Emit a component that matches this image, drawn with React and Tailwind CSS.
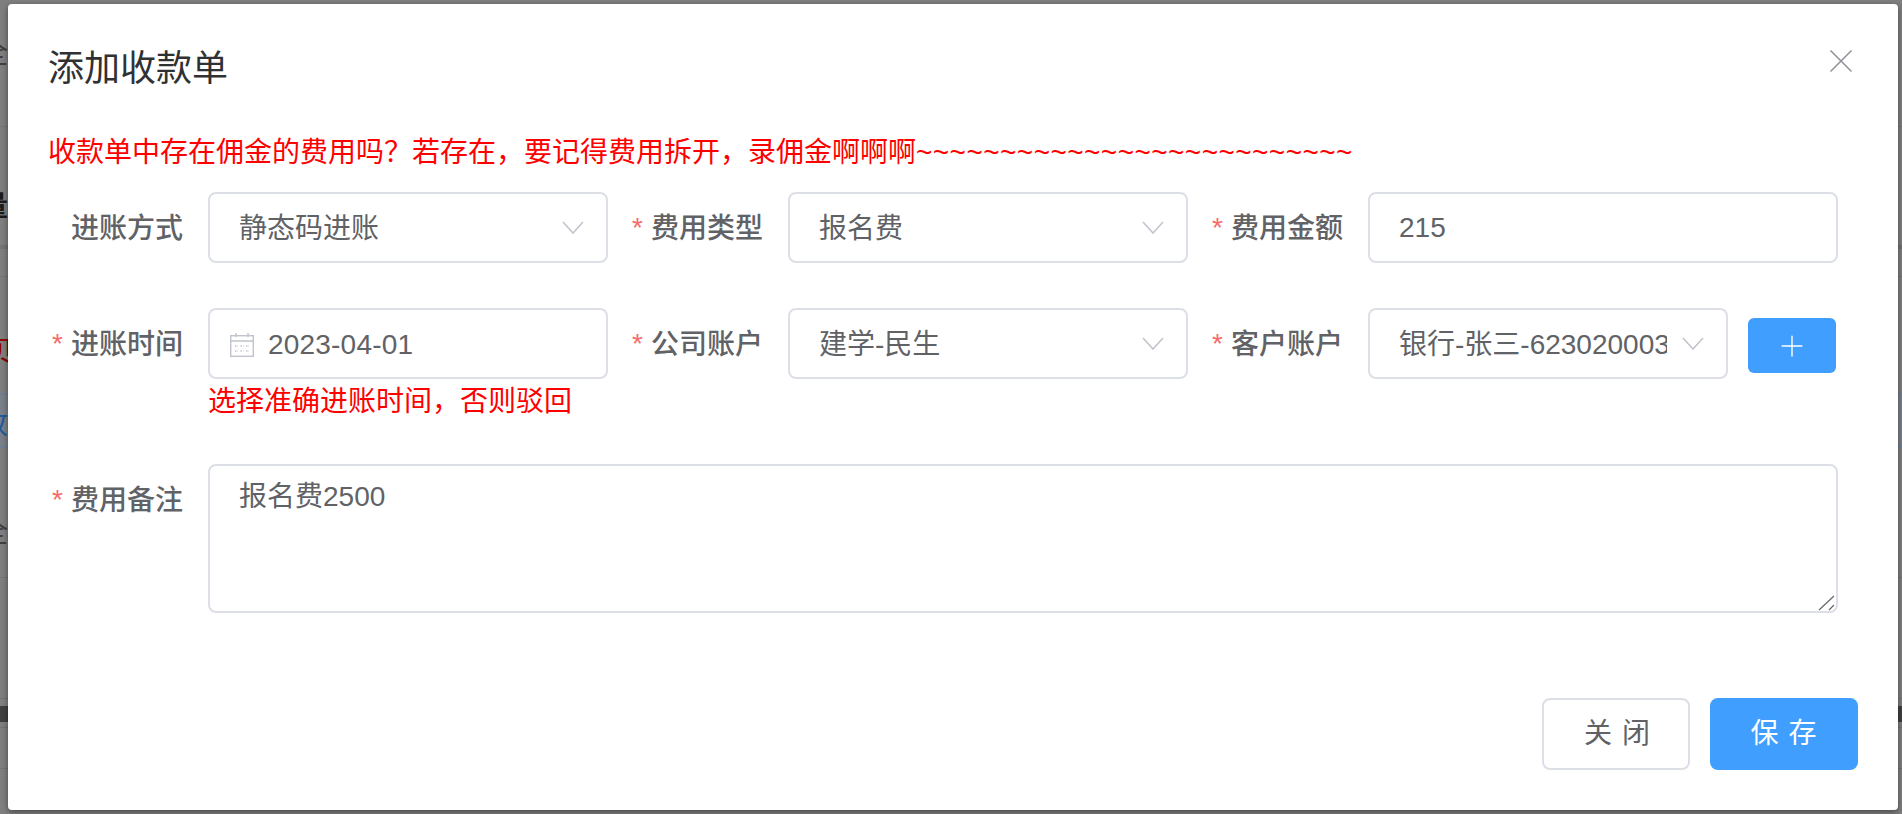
import React from "react";
import { X, Plus } from "lucide-react";

const FONT = "font-['Liberation_Sans','Noto_Sans_CJK_SC',sans-serif]";

const Arrow = () => (
  <svg width="22" height="13" viewBox="0 0 22 13" fill="none" className="shrink-0">
    <path d="M1 1L11 12L21 1" stroke="#c0c4cc" strokeWidth="1.6" />
  </svg>
);

const CalendarIcon = () => (
  <svg width="24" height="24" viewBox="0 0 24 24" fill="none" stroke="#c0c4cc" strokeWidth="1.4" className="shrink-0">
    <rect x="0.7" y="2.7" width="22.6" height="20.6" />
    <path d="M0.7 8H23.3M6 0V4M18 0V4" />
    <path d="M5 13H8M10.5 13H13.5M16 13H19M5 18H8M10.5 18H13.5M16 18H19" strokeDasharray="1.5 1" />
  </svg>
);

const Label = ({ text, required }) => (
  <label className="w-[160px] h-[71px] shrink-0 flex items-center justify-end pr-[25px] pt-[2px] font-medium text-[#606266]">
    {required && <span className="text-[#f56c6c] mr-[8px] -mt-[2px] font-normal">*</span>}
    <span>{text}</span>
  </label>
);

const SelectBox = ({ value, width = "w-[400px]" }) => (
  <div className={`${width} h-[71px] border-2 border-[#dcdfe6] rounded-lg bg-white flex items-center pl-[29px] pr-[22px] pt-[2px] text-[#606266]`}>
    <span className="flex-1 overflow-hidden whitespace-nowrap">{value}</span>
    <div className="ml-[15px] -mt-0.5 flex">
      <Arrow />
    </div>
  </div>
);

const Field = ({ label, required, children }) => (
  <div className="flex items-start">
    <Label text={label} required={required} />
    {children}
  </div>
);

export default function App() {
  return (
    <div className={`relative h-[814px] w-full overflow-hidden bg-[#7f7f7f] text-[28px] ${FONT}`}>
      {/* page behind the mask, only the edges show */}
      <div className="absolute left-0 right-0 top-[706px] h-[16px] bg-[#404040]" />
      <div className="absolute left-0 right-0 top-[126px] h-px bg-[#777777]" />
      <div className="absolute left-0 right-0 top-[245px] h-[4px] bg-[#737373]" />
      <div className="absolute left-0 right-0 top-[276px] h-px bg-[#737373]" />
      <div className="absolute left-0 right-0 top-[393px] h-[55px] border-y-2 border-[#6f7f95] bg-[#7a8089]" />
      <div className="absolute left-0 right-0 top-[577px] h-px bg-[#737373]" />
      <div className="absolute left-0 right-0 top-[698px] h-px bg-[#737373]" />
      <div className="absolute left-0 right-0 top-[727px] h-px bg-[#737373]" />
      <div className="absolute left-0 right-0 top-[768px] h-px bg-[#737373]" />
      <span className="absolute left-[-20px] top-[33px] text-[#404040]">全</span>
      <span className="absolute left-[-20px] top-[186px] font-bold text-[#1a1a1a]">量</span>
      <span className="absolute left-[-14px] top-[332px] text-[#8f0000]">贝</span>
      <span className="absolute left-[-20px] top-[404px] text-[#1f5a9e]">收</span>
      <span className="absolute left-[-20px] top-[512px] text-[#404040]">全</span>

      <div className="relative ml-[8px] mt-[4px] w-[1890px] h-[806px] bg-white rounded-[4px] shadow-[0_2px_6px_rgba(0,0,0,0.45)] pl-[40px] pr-[60px]">
        <button className="absolute right-[37px] top-[37px] text-[#909399]">
          <X size={40} strokeWidth={1} />
        </button>

        <h2 className="pt-[40px] text-[36px] leading-[50px] font-normal text-[#303133]">添加收款单</h2>

        <p className="mt-[39px] h-[40px] leading-[40px] text-[#ff0000] whitespace-nowrap">
          {"收款单中存在佣金的费用吗\uFF1F若存在\uFF0C要记得费用拆开\uFF0C录佣金啊啊啊"}
          <span className="tracking-[0.45px]">~~~~~~~~~~~~~~~~~~~~~~~~~~</span>
        </p>

        <div className="mt-[19px] grid grid-cols-[580px_580px_1fr]">
          <Field label="进账方式">
            <SelectBox value="静态码进账" />
          </Field>
          <Field label="费用类型" required>
            <SelectBox value="报名费" />
          </Field>
          <Field label="费用金额" required>
            <input
              readOnly
              value="215"
              className="w-[470px] h-[71px] border-2 border-[#dcdfe6] rounded-lg pl-[29px] text-[#606266] outline-none"
            />
          </Field>
        </div>

        <div className="mt-[45px] grid grid-cols-[580px_580px_1fr]">
          <Field label="进账时间" required>
            <div>
              <div className="w-[400px] h-[71px] border-2 border-[#dcdfe6] rounded-lg flex items-center pl-[20px] gap-[14px] pt-[2px] text-[#606266]">
                <CalendarIcon />
                <span className="tracking-[0.2px]">2023-04-01</span>
              </div>
              <p className="mt-[3px] h-[40px] leading-[40px] text-[#ff0000] whitespace-nowrap">{"选择准确进账时间\uFF0C否则驳回"}</p>
            </div>
          </Field>
          <Field label="公司账户" required>
            <SelectBox value="建学-民生" />
          </Field>
          <Field label="客户账户" required>
            <div className="flex items-start">
              <SelectBox value="银行-张三-623020003" width="w-[360px]" />
              <button className="ml-[20px] mt-[10px] w-[88px] h-[55px] bg-[#409eff] rounded-md flex items-center justify-center text-white">
                <Plus size={34} strokeWidth={1} />
              </button>
            </div>
          </Field>
        </div>

        <div className="mt-[42px] flex items-start">
          <Label text="费用备注" required />
          <div className="relative flex-1 h-[149px]">
            <textarea
              readOnly
              value="报名费2500"
              className="block w-full h-full border-2 border-[#dcdfe6] rounded-lg px-[29px] py-[10px] leading-[42px] text-[#606266] outline-none resize-none"
            />
            <svg width="18" height="16" viewBox="0 0 18 16" fill="none" stroke="#666666" strokeWidth="1.2" className="absolute right-[2px] bottom-[2px]">
              <path d="M1 15L16 1M11 15L16 10" />
            </svg>
          </div>
        </div>

        <div className="mt-[85px] -mr-[20px] flex justify-end gap-[20px]">
          <button className="w-[148px] h-[72px] border-2 border-[#dcdfe6] rounded-lg bg-white pl-[3px] text-[#606266] tracking-[1px]">关 闭</button>
          <button className="w-[148px] h-[72px] rounded-lg bg-[#409eff] text-white tracking-[1px]">保 存</button>
        </div>
      </div>
    </div>
  );
}
